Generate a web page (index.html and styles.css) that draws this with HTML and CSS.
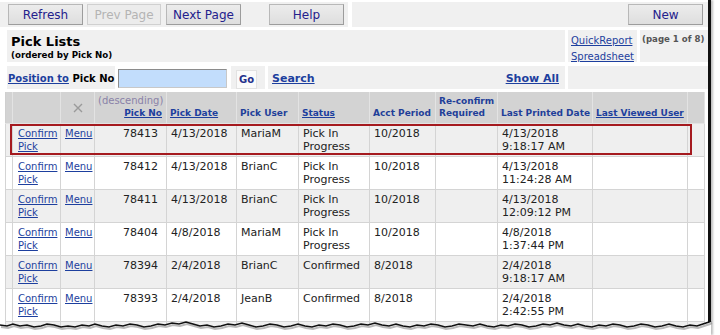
FILE: index.html
```html
<!DOCTYPE html>
<html lang="en">
<head>
    <meta charset="UTF-8">
    <meta name="viewport" content="width=device-width, initial-scale=1.0">
    <title>Pick Lists</title>
    <link rel="stylesheet" href="styles.css">
</head>
<body>
<div class="page">
    <div class="frame">
        <div class="toolbar">
            <div class="tool-cell tool-main">
                <button class="btn">Refresh</button>
                <button class="btn btn-prev" disabled>Prev Page</button>
                <button class="btn btn-next">Next Page</button>
                <button class="btn btn-help">Help</button>
            </div>
            <div class="tool-cell tool-side">
                <button class="btn">New</button>
            </div>
        </div>

        <div class="heading">
            <div class="title-cell">
                <div class="title">Pick Lists</div>
                <div class="subtitle">(ordered by Pick No)</div>
            </div>
            <div class="report-cell">
                <a href="#">QuickReport</a>
                <a href="#">Spreadsheet</a>
            </div>
            <div class="page-cell">(page 1 of 8)</div>
        </div>

        <div class="posbar">
            <div class="pos-cell"><a href="#">Position to</a> Pick No</div>
            <div class="input-cell"><input type="text" class="pos-input"></div>
            <div class="go-cell"><button class="go-btn">Go</button></div>
            <div class="search-cell">
                <a href="#">Search</a>
                <a href="#">Show All</a>
            </div>
            <div class="blank-cell"></div>
        </div>

        <table class="grid">
            <colgroup>
                <col style="width:7px">
                <col style="width:48px">
                <col style="width:34px">
                <col style="width:72px">
                <col style="width:70px">
                <col style="width:62px">
                <col style="width:71px">
                <col style="width:66px">
                <col style="width:62px">
                <col style="width:95px">
                <col style="width:95px">
                <col style="width:17px">
            </colgroup>
            <thead>
            <tr>
                <th></th>
                <th></th>
                <th class="x-head">
                    <svg width="10" height="10" viewBox="0 0 10 10"><path d="M1 1 L9 9 M9 1 L1 9" stroke="#9a9a9a" stroke-width="1.4" fill="none"/></svg>
                </th>
                <th class="num"><span class="desc">(descending)</span><br><a href="#">Pick No</a></th>
                <th><a href="#">Pick Date</a></th>
                <th>Pick User</th>
                <th><a href="#">Status</a></th>
                <th>Acct Period</th>
                <th>Re-confirm<br>Required</th>
                <th>Last Printed Date</th>
                <th><a href="#">Last Viewed User</a></th>
                <th></th>
            </tr>
            </thead>
            <tbody>
            <tr class="odd">
                <td></td>
                <td class="link"><a href="#">Confirm Pick</a></td>
                <td class="link"><a href="#">Menu</a></td>
                <td class="num">78413</td>
                <td>4/13/2018</td>
                <td>MariaM</td>
                <td>Pick In Progress</td>
                <td>10/2018</td>
                <td></td>
                <td>4/13/2018<br>9:18:17 AM</td>
                <td></td>
                <td></td>
            </tr>
            <tr>
                <td></td>
                <td class="link"><a href="#">Confirm Pick</a></td>
                <td class="link"><a href="#">Menu</a></td>
                <td class="num">78412</td>
                <td>4/13/2018</td>
                <td>BrianC</td>
                <td>Pick In Progress</td>
                <td>10/2018</td>
                <td></td>
                <td>4/13/2018<br>11:24:28 AM</td>
                <td></td>
                <td></td>
            </tr>
            <tr class="odd">
                <td></td>
                <td class="link"><a href="#">Confirm Pick</a></td>
                <td class="link"><a href="#">Menu</a></td>
                <td class="num">78411</td>
                <td>4/13/2018</td>
                <td>BrianC</td>
                <td>Pick In Progress</td>
                <td>10/2018</td>
                <td></td>
                <td>4/13/2018<br>12:09:12 PM</td>
                <td></td>
                <td></td>
            </tr>
            <tr>
                <td></td>
                <td class="link"><a href="#">Confirm Pick</a></td>
                <td class="link"><a href="#">Menu</a></td>
                <td class="num">78404</td>
                <td>4/8/2018</td>
                <td>MariaM</td>
                <td>Pick In Progress</td>
                <td>10/2018</td>
                <td></td>
                <td>4/8/2018<br>1:37:44 PM</td>
                <td></td>
                <td></td>
            </tr>
            <tr class="odd">
                <td></td>
                <td class="link"><a href="#">Confirm Pick</a></td>
                <td class="link"><a href="#">Menu</a></td>
                <td class="num">78394</td>
                <td>2/4/2018</td>
                <td>BrianC</td>
                <td>Confirmed</td>
                <td>8/2018</td>
                <td></td>
                <td>2/4/2018<br>9:18:17 AM</td>
                <td></td>
                <td></td>
            </tr>
            <tr>
                <td></td>
                <td class="link"><a href="#">Confirm Pick</a></td>
                <td class="link"><a href="#">Menu</a></td>
                <td class="num">78393</td>
                <td>2/4/2018</td>
                <td>JeanB</td>
                <td>Confirmed</td>
                <td>8/2018</td>
                <td></td>
                <td>2/4/2018<br>2:42:55 PM</td>
                <td></td>
                <td></td>
            </tr>
            <tr class="odd">
                <td></td><td></td><td></td><td></td><td></td><td></td>
                <td></td><td></td><td></td><td></td><td></td><td></td>
            </tr>
            </tbody>
        </table>

        <!-- callout around the first row -->
        <div class="highlight"></div>
    </div>

    <!-- torn bottom edge of the screenshot -->
    <svg class="torn" width="720" height="21" viewBox="0 0 720 21">
        <path class="torn-fill" d="M0,11 L7,12 L13,10 L20,12 L27,11 L34,13 L41,12 L47,10 L54,11 L61,13 L68,12 L75,13 L82,11 L89,12 L95,10 L102,12 L109,13 L116,11 L123,12 L130,10 L137,11 L144,13 L151,12 L158,10 L165,11 L172,9 L179,10 L186,8 L193,10 L200,12 L207,11 L214,13 L221,12 L228,10 L235,11 L242,9 L249,11 L256,13 L263,12 L270,10 L277,11 L284,13 L291,12 L298,10 L305,12 L312,13 L319,11 L326,12 L333,10 L340,11 L347,13 L354,12 L361,10 L368,11 L375,9 L382,11 L389,12 L396,10 L403,12 L410,13 L417,11 L424,12 L431,10 L438,11 L445,13 L452,12 L459,10 L466,11 L473,12 L480,10 L487,12 L494,13 L501,11 L508,12 L515,10 L522,11 L529,13 L536,12 L543,10 L550,11 L557,9 L564,11 L571,12 L578,10 L585,12 L592,13 L599,11 L606,12 L613,10 L620,11 L627,13 L634,12 L641,10 L648,11 L655,13 L662,12 L669,10 L676,12 L683,13 L690,11 L697,12 L703,10 L709,8 L711,7 L711,21 L0,21 Z"/>
        <path class="torn-shadow" d="M0,11 L7,12 L13,10 L20,12 L27,11 L34,13 L41,12 L47,10 L54,11 L61,13 L68,12 L75,13 L82,11 L89,12 L95,10 L102,12 L109,13 L116,11 L123,12 L130,10 L137,11 L144,13 L151,12 L158,10 L165,11 L172,9 L179,10 L186,8 L193,10 L200,12 L207,11 L214,13 L221,12 L228,10 L235,11 L242,9 L249,11 L256,13 L263,12 L270,10 L277,11 L284,13 L291,12 L298,10 L305,12 L312,13 L319,11 L326,12 L333,10 L340,11 L347,13 L354,12 L361,10 L368,11 L375,9 L382,11 L389,12 L396,10 L403,12 L410,13 L417,11 L424,12 L431,10 L438,11 L445,13 L452,12 L459,10 L466,11 L473,12 L480,10 L487,12 L494,13 L501,11 L508,12 L515,10 L522,11 L529,13 L536,12 L543,10 L550,11 L557,9 L564,11 L571,12 L578,10 L585,12 L592,13 L599,11 L606,12 L613,10 L620,11 L627,13 L634,12 L641,10 L648,11 L655,13 L662,12 L669,10 L676,12 L683,13 L690,11 L697,12 L703,10 L709,8 L711,7"/>
        <path class="torn-line" d="M0,11 L7,12 L13,10 L20,12 L27,11 L34,13 L41,12 L47,10 L54,11 L61,13 L68,12 L75,13 L82,11 L89,12 L95,10 L102,12 L109,13 L116,11 L123,12 L130,10 L137,11 L144,13 L151,12 L158,10 L165,11 L172,9 L179,10 L186,8 L193,10 L200,12 L207,11 L214,13 L221,12 L228,10 L235,11 L242,9 L249,11 L256,13 L263,12 L270,10 L277,11 L284,13 L291,12 L298,10 L305,12 L312,13 L319,11 L326,12 L333,10 L340,11 L347,13 L354,12 L361,10 L368,11 L375,9 L382,11 L389,12 L396,10 L403,12 L410,13 L417,11 L424,12 L431,10 L438,11 L445,13 L452,12 L459,10 L466,11 L473,12 L480,10 L487,12 L494,13 L501,11 L508,12 L515,10 L522,11 L529,13 L536,12 L543,10 L550,11 L557,9 L564,11 L571,12 L578,10 L585,12 L592,13 L599,11 L606,12 L613,10 L620,11 L627,13 L634,12 L641,10 L648,11 L655,13 L662,12 L669,10 L676,12 L683,13 L690,11 L697,12 L703,10 L709,8 L711,7"/>
    </svg>
</div>
</body>
</html>
```

FILE: styles.css
```css
body {
    margin: 0;
    padding: 0;
    background-color: #fff;
    font-family: "DejaVu Sans", Verdana, sans-serif;
    color: #222;
}

.page {
    position: relative;
    width: 720px;
    height: 335px;
    overflow: hidden;
}

.frame {
    position: relative;
    width: 708px;
    height: 335px;
    border-right: 3px solid #111;
    box-shadow: 2px 0 2px rgba(0, 0, 0, 0.25);
    background-color: #fff;
}

a {
    color: #1d3f9e;
}

/* toolbar */
.toolbar {
    display: flex;
    gap: 4px;
    height: 25px;
    padding-top: 2px;
}

.tool-cell {
    display: flex;
    align-items: flex-start;
    background-color: #f0f0f0;
}

.tool-main {
    width: 348px;
}

.tool-side {
    flex: 1;
    justify-content: flex-end;
}

.btn {
    width: 75px;
    height: 21px;
    margin-top: 2px;
    padding: 0;
    font-family: "DejaVu Sans", Verdana, sans-serif;
    font-size: 12px;
    color: #23208c;
    background: linear-gradient(#ececec, #dedede);
    border: 1px solid #9c9c9c;
    border-top-color: #b8b8b8;
    border-left-color: #b8b8b8;
}

.tool-main .btn:first-child {
    margin-left: 8px;
}

.btn-prev {
    margin-left: 4px;
    width: 74px;
    color: #b4b4b4;
    background: #ececec;
    border-color: #d0d0d0;
}

.btn-next {
    margin-left: 5px;
}

.btn-help {
    margin-left: 28px;
}

.tool-side .btn {
    margin-right: 5px;
}

/* heading */
.heading {
    display: flex;
    gap: 3px;
    height: 32px;
    margin: 3px 0 0 7px;
}

.title-cell,
.report-cell,
.page-cell {
    background-color: #f0f0f0;
}

.title-cell {
    width: 554px;
    padding: 4px 0 0 4px;
}

.title {
    font-size: 13px;
    font-weight: bold;
    color: #000;
    line-height: 15px;
}

.subtitle {
    font-size: 8.7px;
    font-weight: bold;
    color: #000;
    line-height: 12px;
}

.report-cell {
    width: 66px;
    padding: 4px 0 0 3px;
    display: flex;
    flex-direction: column;
    gap: 3px;
}

.report-cell a {
    font-size: 10px;
    line-height: 13px;
}

.page-cell {
    flex: 1;
    padding: 4px 0 0 2px;
    font-size: 8.6px;
    font-weight: bold;
    color: #555;
    white-space: nowrap;
}

/* position bar */
.posbar {
    display: flex;
    gap: 3px;
    height: 23px;
    margin: 4px 0 0 7px;
}

.pos-cell,
.go-cell,
.search-cell,
.blank-cell {
    background-color: #f0f0f0;
}

.pos-cell {
    width: 107px;
    padding-left: 1px;
    font-size: 10px;
    font-weight: bold;
    color: #000;
    line-height: 25px;
    white-space: nowrap;
}

.pos-cell a {
    color: #1d3f9e;
}

.input-cell {
    width: 110px;
    padding-top: 2px;
}

.pos-input {
    box-sizing: border-box;
    width: 109px;
    height: 19px;
    margin: 0;
    background-color: #c2ddfc;
    border: 1px solid #8c8c8c;
    border-right-color: #c8c8c8;
    border-bottom-color: #c8c8c8;
}

.go-cell {
    width: 29px;
    padding: 2px 0 0 5px;
}

.go-btn {
    width: 21px;
    height: 19px;
    padding: 0;
    font-family: "DejaVu Sans", Verdana, sans-serif;
    font-size: 10px;
    font-weight: bold;
    color: #24308c;
    background-color: #fbfbfb;
    border: 1px solid #e2e2e2;
}

.search-cell {
    width: 287px;
    padding: 0 6px 0 4px;
    display: flex;
    justify-content: space-between;
    align-items: center;
    padding-top: 1px;
}

.search-cell a {
    font-size: 11px;
    font-weight: bold;
}

.blank-cell {
    flex: 1;
}

/* grid */
.grid {
    border-collapse: collapse;
    table-layout: fixed;
    width: 699px;
    margin: 3px 0 0 5px;
    font-size: 11px;
}

.grid thead tr {
    height: 31px;
}

.grid th {
    background-color: #d3d3d3;
    border: 1px solid #e3e3e3;
    border-top: none;
    border-left-color: #cfcfcf;
    padding: 0 3px 4px;
    vertical-align: bottom;
    text-align: left;
    font-size: 9px;
    font-weight: bold;
    line-height: 12px;
    color: #1f3f99;
    white-space: nowrap;
    overflow: hidden;
}

.grid th a {
    color: #1d3f9e;
}

.grid th.num {
    text-align: right;
    padding-right: 4px;
}

.grid th .desc {
    font-size: 10px;
    font-weight: normal;
    color: #8a82a8;
}

.grid th.x-head {
    text-align: center;
    padding-bottom: 7px;
}

.grid tbody tr {
    height: 33px;
    background-color: #fff;
}

.grid tbody tr.odd {
    background-color: #efefef;
}

.grid td {
    border: 1px solid #d4d4d4;
    padding: 3px 3px 0 4px;
    vertical-align: top;
    line-height: 13px;
    color: #222;
    overflow: hidden;
}

.grid td.link {
    padding-left: 4px;
    padding-right: 0;
}

.grid td.link:nth-child(2) {
    padding-left: 5px;
}

.grid td.link a {
    font-size: 10px;
}

.grid td.num {
    text-align: right;
    padding-right: 8px;
}

.highlight {
    position: absolute;
    left: 10px;
    top: 124px;
    width: 678px;
    height: 27px;
    border: 2px solid #a51a1f;
}

/* torn edge */
.torn {
    position: absolute;
    left: 0;
    top: 314px;
}

.torn-fill {
    fill: #fff;
}

.torn-shadow {
    fill: none;
    stroke: #8a8a8a;
    stroke-width: 2;
    opacity: 0.6;
    transform: translate(1px, 2px);
}

.torn-line {
    fill: none;
    stroke: #111;
    stroke-width: 1.6;
}
```
